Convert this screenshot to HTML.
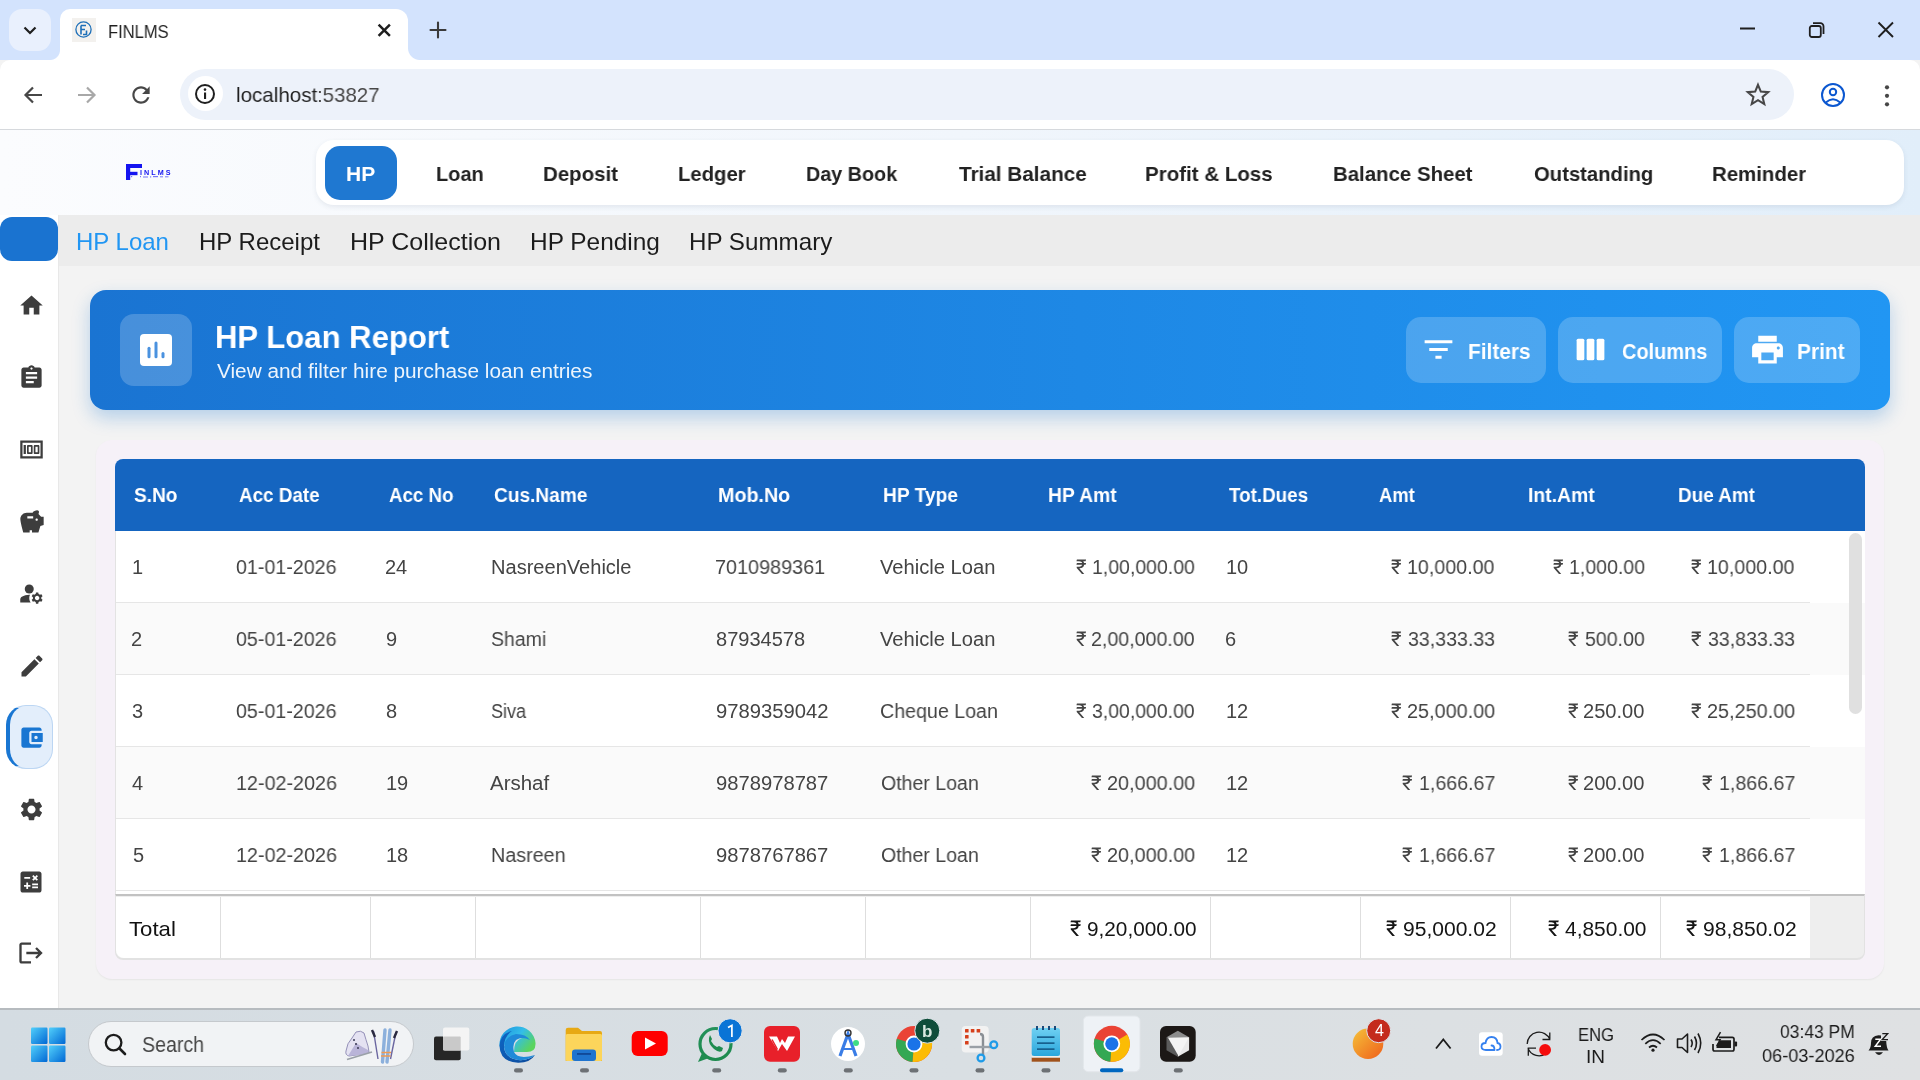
<!DOCTYPE html>
<html><head><meta charset="utf-8"><title>FINLMS</title>
<style>
*{box-sizing:border-box;margin:0;padding:0}
html,body{width:1920px;height:1080px;overflow:hidden;font-family:"Liberation Sans",sans-serif;background:#f3f3f3;position:relative}
.a{position:absolute}
.t{position:absolute;white-space:nowrap;line-height:1;transform-origin:0 0;will-change:transform}
svg{position:absolute;overflow:visible}
#tabbar{left:0;top:0;width:1920px;height:60px;background:#d3e3fd}
#dd{left:9px;top:9px;width:42px;height:42px;border-radius:13px;background:#e9f0fd}
#tab{left:60px;top:9px;width:348px;height:51px;background:#fff;border-radius:10px 12px 0 0}
#toolbar{left:0;top:60px;width:1920px;height:70px;background:#fff;border-bottom:1px solid #d6d9dd;border-radius:10px 10px 0 0}
#addr{left:180px;top:69px;width:1614px;height:51px;border-radius:26px;background:#edf2fa}
#infoc{left:188px;top:76px;width:35px;height:35px;border-radius:50%;background:#fff}
#header{left:0;top:130px;width:1920px;height:85px;background:linear-gradient(90deg,#fbfcfe 0%,#f1f6fc 50%,#e1eefa 100%)}
#nav{left:316px;top:140px;width:1588px;height:65px;background:#fff;border-radius:18px;box-shadow:0 2px 5px rgba(60,80,110,0.10)}
#hpbtn{left:325px;top:146px;width:72px;height:54px;border-radius:15px;background:#1f78d1}
#side{left:0;top:215px;width:59px;height:793px;background:#fff;border-right:1px solid #e8e8e8}
#sidetop{left:0px;top:216.5px;width:58px;height:44px;border-radius:12px;background:#1a73d0}
#subnav{left:59px;top:215px;width:1861px;height:51px;background:#ececec}
#pill{left:6px;top:705px;width:47px;height:64px;border-radius:20px;background:#e3eefb;border:1px solid #bcd6f3;border-left:4.5px solid #1976d2}
#banner{left:90px;top:290px;width:1800px;height:120px;border-radius:16px;background:linear-gradient(90deg,#1a74d2 0%,#1e88e5 55%,#2196f3 100%);box-shadow:0 8px 18px rgba(25,118,210,0.28)}
#iconbox{left:120px;top:314px;width:72px;height:72px;border-radius:14px;background:rgba(255,255,255,0.2)}
.btn{position:absolute;top:317px;height:66px;border-radius:15px;background:rgba(255,255,255,0.2)}
#card{left:96px;top:440px;width:1788px;height:539px;border-radius:16px;background:#f6f1f8;box-shadow:0 1px 2px rgba(0,0,0,0.06)}
#thead{left:115px;top:459px;width:1750px;height:72px;border-radius:8px 8px 0 0;background:#1565c0}
#tbody{left:115px;top:531px;width:1750px;height:363px;background:#fff;border-left:1px solid #e3e3e3}
.row{position:absolute;left:116px;width:1749px;height:72px}
.sep{position:absolute;left:116px;width:1694px;height:1px;background:#e6e6e6}
#sbtrack{left:1810px;top:531px;width:55px;height:363px;background:#fff}
#sbthumb{left:1849px;top:533px;width:13px;height:181px;border-radius:7px;background:#e0e0e0}
#tfoot{left:115px;top:894px;width:1750px;height:66px;background:#eeeeee;border-top:2px solid #c2c2c2;border-radius:0 0 8px 8px;border-bottom:2px solid #e2e2e2;border-left:1px solid #e2e2e2;border-right:1px solid #e2e2e2}
.fc{position:absolute;top:897px;height:61px;background:#fff;border-right:1.5px solid #dedede}
#taskbar{left:0;top:1008px;width:1920px;height:72px;background:linear-gradient(90deg,#d4dce2 0%,#d9dfe3 50%,#dfe1e3 100%);border-top:2px solid #b6bbbf}
#search{left:88px;top:1021px;width:326px;height:46px;border-radius:23px;background:#f1f3f5;border:1px solid #c5c9cd}
</style></head><body>
<div id="tabbar" class="a"></div>
<div id="dd" class="a"></div>
<div id="tab" class="a"></div>
<div id="toolbar" class="a"></div>
<div id="addr" class="a"></div>
<div id="infoc" class="a"></div>
<div id="header" class="a"></div>
<div id="nav" class="a"></div>
<div id="hpbtn" class="a"></div>
<div id="side" class="a"></div>
<div id="sidetop" class="a"></div>
<div id="subnav" class="a"></div>
<div id="pill" class="a"></div>
<div id="banner" class="a"></div>
<div id="iconbox" class="a"></div>
<div class="btn" style="left:1406px;width:140px"></div>
<div class="btn" style="left:1558px;width:164px"></div>
<div class="btn" style="left:1734px;width:126px"></div>
<div id="card" class="a"></div>
<div id="thead" class="a"></div>
<div id="tbody" class="a"></div>
<div class="row" style="top:603px;background:#fafafa"></div>
<div class="row" style="top:747px;background:#fafafa"></div>
<div class="sep" style="top:602px"></div>
<div class="sep" style="top:674px"></div>
<div class="sep" style="top:746px"></div>
<div class="sep" style="top:818px"></div>
<div class="sep" style="top:890px"></div>
<div id="sbthumb" class="a"></div>
<div id="tfoot" class="a"></div>
<div id="taskbar" class="a"></div>
<div id="search" class="a"></div>
<div class="fc" style="left:116px;width:105px;border-radius:0 0 0 8px"></div>
<div class="fc" style="left:221px;width:150px"></div>
<div class="fc" style="left:371px;width:105px"></div>
<div class="fc" style="left:476px;width:225px"></div>
<div class="fc" style="left:701px;width:165px"></div>
<div class="fc" style="left:866px;width:165px"></div>
<div class="fc" style="left:1031px;width:180px"></div>
<div class="fc" style="left:1211px;width:150px"></div>
<div class="fc" style="left:1361px;width:150px"></div>
<div class="fc" style="left:1511px;width:150px"></div>
<div class="fc" style="left:1661px;width:149px;border-right:none"></div>

<!-- chrome icons -->
<svg style="left:20px;top:20px" width="20" height="20" viewBox="0 0 20 20"><path d="M4.5 7.5 L10 13 L15.5 7.5" fill="none" stroke="#1f1f1f" stroke-width="2.2"/></svg>
<div class="a" style="left:72px;top:18px;width:24px;height:24px;background:#f3f1ee"></div>
<svg style="left:75px;top:21px" width="18" height="18" viewBox="0 0 18 18"><circle cx="8.5" cy="8.5" r="7.6" fill="none" stroke="#1d6fb8" stroke-width="1.3"/><path d="M6 4.5h5M6 4.5v9M6 8.5h4M8 13.5h3.5v-4" fill="none" stroke="#1d6fb8" stroke-width="1.6"/></svg>
<svg style="left:376px;top:22px" width="16" height="16" viewBox="0 0 16 16"><path d="M2.6 2.6 L13.9 13.9 M13.9 2.6 L2.6 13.9" stroke="#1f1f1f" stroke-width="2.5"/></svg>
<svg style="left:426px;top:18px" width="24" height="24" viewBox="0 0 24 24"><path d="M12 4.5v15M4.5 12h15" stroke="#3a3a3a" stroke-width="2.1" stroke-linecap="round"/></svg>
<svg style="left:1740px;top:27px" width="16" height="4"><rect x="0" y="0.5" width="15" height="2" fill="#1f1f1f"/></svg>
<svg style="left:1808px;top:21px" width="18" height="18" viewBox="0 0 18 18"><rect x="1.8" y="5" width="11" height="11" rx="2" fill="none" stroke="#1f1f1f" stroke-width="1.8"/><path d="M5 2.2h7.5a3 3 0 0 1 3 3V13" fill="none" stroke="#1f1f1f" stroke-width="1.8"/></svg>
<svg style="left:1877px;top:21px" width="18" height="18" viewBox="0 0 18 18"><path d="M1.5 1.5 L16 16 M16 1.5 L1.5 16" stroke="#1f1f1f" stroke-width="1.9"/></svg>
<svg style="left:21px;top:83px" width="24" height="24" viewBox="0 0 24 24"><path d="M21 12H5M12 4.5 4.5 12 12 19.5" fill="none" stroke="#474747" stroke-width="2.2"/></svg>
<svg style="left:75px;top:83px" width="24" height="24" viewBox="0 0 24 24"><path d="M3 12H19M12 4.5 19.5 12 12 19.5" fill="none" stroke="#a8a8a8" stroke-width="2.2"/></svg>
<svg style="left:128px;top:82px" width="26" height="26" viewBox="0 0 24 24"><path d="M17.65 6.35C16.2 4.9 14.21 4 12 4c-4.42 0-7.99 3.58-7.99 8s3.57 8 7.99 8c3.73 0 6.84-2.55 7.73-6h-2.08c-.82 2.33-3.04 4-5.65 4-3.31 0-6-2.69-6-6s2.69-6 6-6c1.66 0 3.14.69 4.22 1.78L13 11h7V4l-2.35 2.35z" fill="#474747"/></svg>
<svg style="left:193px;top:82px" width="24" height="24" viewBox="0 0 24 24"><circle cx="12" cy="12" r="9" fill="none" stroke="#1f1f1f" stroke-width="2"/><rect x="11" y="10.5" width="2.1" height="6.5" fill="#1f1f1f"/><circle cx="12" cy="7.6" r="1.3" fill="#1f1f1f"/></svg>
<svg style="left:1745px;top:82px" width="26" height="26" viewBox="0 0 24 24"><path d="M12 2.6 14.6 8.9 21.4 9.4 16.2 13.8 17.8 20.4 12 16.8 6.2 20.4 7.8 13.8 2.6 9.4 9.4 8.9Z" fill="none" stroke="#474747" stroke-width="1.9" stroke-linejoin="miter"/></svg>
<svg style="left:1820px;top:82px" width="26" height="26" viewBox="0 0 26 26"><circle cx="13" cy="13" r="11" fill="none" stroke="#0b57d0" stroke-width="2"/><circle cx="13" cy="10" r="3.2" fill="none" stroke="#0b57d0" stroke-width="2"/><path d="M5.8 20.5 Q13 14 20.2 20.5" fill="none" stroke="#0b57d0" stroke-width="2"/></svg>
<svg style="left:1882px;top:84px" width="10" height="24" viewBox="0 0 10 24"><circle cx="5" cy="3.3" r="2.1" fill="#474747"/><circle cx="5" cy="11.8" r="2.1" fill="#474747"/><circle cx="5" cy="20.3" r="2.1" fill="#474747"/></svg>
<!-- address text grey part -->
<div class="a" style="left:50px;top:50px;width:10px;height:10px;background:radial-gradient(circle at 0 0,#d3e3fd 9.5px,#fff 10.5px)"></div>
<div class="a" style="left:408px;top:48px;width:12px;height:12px;background:radial-gradient(circle at 100% 0,#d3e3fd 11.5px,#fff 12.5px)"></div>
<!-- logo -->
<svg style="left:0;top:0" width="1" height="1"><g fill="#1414f0"><rect x="126" y="165" width="4.2" height="15"/><rect x="126" y="164" width="16" height="4"/><rect x="129" y="171.8" width="8.5" height="3.4"/></g></svg>
<div class="t" style="left:139.5px;top:168.6px;font-size:7.2px;font-weight:bold;color:#1414f0;letter-spacing:2.05px">INLMS</div>
<svg style="left:0;top:0" width="1" height="1"><g fill="#4a4af5" opacity="0.75"><rect x="131" y="176" width="1.2" height="1.2"/><rect x="140" y="176" width="1" height="1.2"/><rect x="143" y="176.5" width="5" height="1"/><rect x="150" y="176.3" width="1.2" height="1.2"/><rect x="153" y="176" width="5" height="1.2"/><rect x="160" y="176.3" width="3" height="1"/><rect x="165" y="176.3" width="3.5" height="1"/></g></svg>
<!-- sidebar icons -->
<svg style="left:18.15px;top:292.4px" width="27" height="27" viewBox="0 0 24 24"><path fill="#3d3d3d" d="M10 20v-6h4v6h5v-8h3L12 3 2 12h3v8z"/></svg>
<svg style="left:18.45px;top:364.1px" width="27" height="27" viewBox="0 0 24 24"><path fill="#3d3d3d" d="M19 3h-4.18C14.4 1.84 13.3 1 12 1c-1.3 0-2.4.84-2.82 2H5c-1.1 0-2 .9-2 2v14c0 1.1.9 2 2 2h14c1.1 0 2-.9 2-2V5c0-1.1-.9-2-2-2zm-7 0c.55 0 1 .45 1 1s-.45 1-1 1-1-.45-1-1 .45-1 1-1zm2 14H7v-2h7v2zm3-4H7v-2h10v2zm0-4H7V7h10v2z"/></svg>
<svg style="left:17.94px;top:435.7px" width="27" height="27" viewBox="0 0 24 24"><path fill="#3d3d3d" d="M5 8h2v8H5zm7 0H9c-.55 0-1 .45-1 1v6c0 .55.45 1 1 1h3c.55 0 1-.45 1-1V9c0-.55-.45-1-1-1zm-.5 6.5h-2v-5h2v5zM18 8h-3c-.55 0-1 .45-1 1v6c0 .55.45 1 1 1h3c.55 0 1-.45 1-1V9c0-.55-.45-1-1-1zm-.5 6.5h-2v-5h2v5zM2 4v16h20V4H2zm2 14V6h16v12H4z"/></svg>
<svg style="left:17.7px;top:507.8px" width="28" height="28" viewBox="0 0 24 24"><path fill="#3d3d3d" d="M19.83 7.5l-2.27-2.27c.07-.42.18-.81.32-1.15.08-.18.12-.37.12-.58 0-.83-.67-1.5-1.5-1.5-1.64 0-3.09.79-4 2h-5C4.46 4 2 6.46 2 9.5S4.5 21 4.5 21H10v-2h2v2h5.5l1.68-5.59 2.82-.94V7.5h-2.17zM13 9H8V7h5v2zm3 2c-.55 0-1-.45-1-1s.45-1 1-1 1 .45 1 1-.45 1-1 1z"/></svg>
<svg style="left:17.8px;top:579.75px" width="27" height="27" viewBox="0 0 24 24"><circle cx="10" cy="8" r="4" fill="#3d3d3d"/><path fill="#3d3d3d" d="M10.67 13.02c-.22-.01-.44-.02-.67-.02-2.42 0-4.68.67-6.61 1.82-.88.52-1.39 1.5-1.39 2.53V20h9.26c-.79-1.13-1.26-2.51-1.26-4 0-1.07.25-2.07.67-2.98zM20.75 16c0-.22-.03-.42-.06-.63l1.14-1.01-1-1.73-1.45.49c-.32-.27-.68-.48-1.08-.63L18 11h-2l-.3 1.49c-.4.15-.76.36-1.08.63l-1.45-.49-1 1.73 1.14 1.01c-.03.21-.06.41-.06.63s.03.42.06.63l-1.14 1.01 1 1.73 1.45-.49c.32.27.68.48 1.08.63L16 21h2l.3-1.49c.4-.15.76-.36 1.08-.63l1.45.49 1-1.73-1.14-1.01c.03-.21.06-.41.06-.63zM17 18c-1.1 0-2-.9-2-2s.9-2 2-2 2 .9 2 2-.9 2-2 2z"/></svg>
<svg style="left:18.05px;top:651.85px" width="28" height="28" viewBox="0 0 24 24"><path fill="#3d3d3d" d="M3 17.25V21h3.75L17.81 9.94l-3.75-3.75L3 17.25zM20.71 7.04c.39-.39.39-1.02 0-1.41l-2.34-2.34c-.39-.39-1.02-.39-1.41 0l-1.83 1.83 3.75 3.75 1.83-1.83z"/></svg>
<svg style="left:17.9px;top:723.8px" width="27" height="27" viewBox="0 0 24 24"><path fill="#1976d2" d="M21 18v1c0 1.1-.9 2-2 2H5c-1.11 0-2-.9-2-2V5c0-1.1.89-2 2-2h14c1.1 0 2 .9 2 2v1h-9c-1.11 0-2 .9-2 2v8c0 1.1.89 2 2 2h9zm-9-2h10V8H12v8zm4-2.5c-.83 0-1.5-.67-1.5-1.5s.67-1.5 1.5-1.5 1.5.67 1.5 1.5-.67 1.5-1.5 1.5z"/></svg>
<svg style="left:17.86px;top:796.06px" width="27" height="27" viewBox="0 0 24 24"><path fill="#3d3d3d" d="M19.14 12.94c.04-.3.06-.61.06-.94 0-.32-.02-.64-.07-.94l2.03-1.58c.18-.14.23-.41.12-.61l-1.92-3.32c-.12-.22-.37-.29-.59-.22l-2.39.96c-.5-.38-1.03-.7-1.62-.94l-.36-2.54c-.04-.24-.24-.41-.48-.41h-3.84c-.24 0-.43.17-.47.41l-.36 2.54c-.59.24-1.13.57-1.62.94l-2.39-.96c-.22-.08-.47 0-.59.22L2.74 8.87c-.12.21-.08.47.12.61l2.03 1.58c-.05.3-.09.63-.09.94s.02.64.07.94l-2.03 1.58c-.18.14-.23.41-.12.61l1.92 3.32c.12.22.37.29.59.22l2.39-.96c.5.38 1.03.7 1.62.94l.36 2.54c.05.24.24.41.48.41h3.84c.24 0 .44-.17.47-.41l.36-2.54c.59-.24 1.13-.56 1.62-.94l2.39.96c.22.08.47 0 .59-.22l1.92-3.32c.12-.22.07-.47-.12-.61l-2.01-1.58zM12 15.6c-1.98 0-3.6-1.62-3.6-3.6s1.62-3.6 3.6-3.6 3.6 1.62 3.6 3.6-1.62 3.6-3.6 3.6z"/></svg>
<svg style="left:17.45px;top:867.65px" width="28" height="28" viewBox="0 0 24 24"><path fill="#3d3d3d" d="M19 3H5c-1.1 0-2 .9-2 2v14c0 1.1.9 2 2 2h14c1.1 0 2-.9 2-2V5c0-1.1-.9-2-2-2zm-5.97 4.06L14.09 6l1.41 1.41L16.91 6l1.06 1.06-1.41 1.41 1.41 1.41-1.06 1.06-1.41-1.4-1.41 1.41-1.06-1.06 1.41-1.41-1.41-1.42zm-6.78.66h5v1.5h-5v-1.5zM11.5 16h-2v2H8v-2H6v-1.5h2v-2h1.5v2h2V16zm6.5 1.25h-5v-1.5h5v1.5zm0-2.5h-5v-1.5h5v1.5z"/></svg>
<svg style="left:17.28px;top:939.48px" width="28" height="28" viewBox="0 0 24 24"><path fill="#3d3d3d" d="M17 7l-1.41 1.41L18.17 11H8v2h10.17l-2.58 2.58L17 17l5-5zM4 5h8V3H4c-1.1 0-2 .9-2 2v14c0 1.1.9 2 2 2h8v-2H4V5z"/></svg>
<!-- banner icons -->
<div class="a" style="left:140px;top:334px;width:32px;height:32px;border-radius:4px;background:#fff"></div>
<svg style="left:0;top:0" width="1" height="1"><g fill="#4a92df"><rect x="147.5" y="346.8" width="3" height="11.5" rx="1.5"/><rect x="154.5" y="341.4" width="3" height="16.9" rx="1.5"/><rect x="161.5" y="351.9" width="3" height="6.4" rx="1.5"/></g></svg>
<svg style="left:1420.4px;top:331.46px" width="37" height="37" viewBox="0 0 24 24"><path fill="#fff" d="M10 18h4v-2h-4v2zM3 6v2h18V6H3zm3 7h12v-2H6v2z"/></svg>
<svg style="left:1572.3px;top:331.2px" width="37" height="37" viewBox="0 0 24 24"><g fill="#fff"><rect x="3" y="5" width="5" height="14" rx="1"/><rect x="9.5" y="5" width="5" height="14" rx="1"/><rect x="16" y="5" width="5" height="14" rx="1"/></g></svg>
<svg style="left:1748.6px;top:331.35px" width="37" height="37" viewBox="0 0 24 24"><path fill="#fff" d="M19 8H5c-1.66 0-3 1.34-3 3v6h4v4h12v-4h4v-6c0-1.66-1.34-3-3-3zm-3 11H8v-5h8v5zm3-7c-.55 0-1-.45-1-1s.45-1 1-1 1 .45 1 1-.45 1-1 1zm-1-9H6v4h12V3z"/></svg>
<!-- taskbar -->
<svg style="left:0;top:0" width="1" height="1">
 <defs>
  <linearGradient id="win" x1="0" y1="0" x2="1" y2="1"><stop offset="0" stop-color="#52d0fb"/><stop offset="1" stop-color="#0067d4"/></linearGradient>
  <linearGradient id="edge1" x1="0" y1="0" x2="1" y2="1"><stop offset="0" stop-color="#36c0f0"/><stop offset="0.6" stop-color="#1d8fd8"/><stop offset="1" stop-color="#55d46a"/></linearGradient>
  <linearGradient id="wa" x1="0" y1="0" x2="0" y2="1"><stop offset="0" stop-color="#23915a"/><stop offset="1" stop-color="#1d8a4e"/></linearGradient>
  <linearGradient id="np" x1="0" y1="0" x2="0" y2="1"><stop offset="0" stop-color="#6fd0f2"/><stop offset="1" stop-color="#2aa6dc"/></linearGradient>
  <linearGradient id="org" x1="0" y1="0" x2="1" y2="1"><stop offset="0" stop-color="#f5c23a"/><stop offset="1" stop-color="#ef5f1a"/></linearGradient>
 </defs>
 <!-- windows logo -->
 <g fill="url(#win)"><rect x="31" y="1027.5" width="16.5" height="16.5" rx="1.2"/><rect x="49" y="1027.5" width="16.5" height="16.5" rx="1.2"/><rect x="31" y="1045.5" width="16.5" height="16.5" rx="1.2"/><rect x="49" y="1045.5" width="16.5" height="16.5" rx="1.2"/></g>
 <!-- search icon -->
 <circle cx="113.6" cy="1042.6" r="7.8" fill="none" stroke="#1c1c1c" stroke-width="2.3"/><path d="M119.5 1048.5 L125 1054" stroke="#1c1c1c" stroke-width="2.6" stroke-linecap="round"/>
 <!-- skates & skis -->
 <path d="M346 1051 Q347 1043 352 1038 L356 1032 Q361 1030 364 1033 Q366 1040 368 1046 L369 1052 Q360 1055 349 1056 Q345 1055 346 1051Z" fill="#e4e2f2" stroke="#8a86b0" stroke-width="0.9"/>
 <path d="M356 1043 Q362 1047 368 1050 L368 1053 Q358 1056 348 1056Z" fill="#b9b4d8"/>
 <g fill="#3a3a55"><circle cx="354" cy="1040" r="1"/><circle cx="356" cy="1044" r="1"/><circle cx="358" cy="1048" r="1"/></g>
 <path d="M347 1059.5 L372 1052" stroke="#9aa0a8" stroke-width="1.8"/>
 <path d="M373.5 1031 L378 1059" stroke="#6a66a0" stroke-width="1.4"/><path d="M396 1032 L390.5 1059" stroke="#6a66a0" stroke-width="1.4"/>
 <path d="M372 1030 L375 1037 M397 1031 L394 1038" stroke="#2a2a40" stroke-width="2.4"/>
 <path d="M385 1030 L382.5 1062" stroke="#8cb0dc" stroke-width="3.4" stroke-linecap="round"/><path d="M390 1030 L387 1062" stroke="#8cb0dc" stroke-width="3.4" stroke-linecap="round"/>
 <path d="M381.5 1052.5 L391 1052.5 M381 1056 L390.5 1056" stroke="#f09a50" stroke-width="1.3"/>
 <!-- task view -->
 <rect x="434" y="1036.6" width="26.7" height="23.7" rx="2" fill="#262626"/>
 <rect x="443" y="1027.4" width="26.3" height="23.1" rx="2" fill="#f4f4f4"/>
 <rect x="443" y="1036.6" width="17.7" height="13.9" rx="1" fill="#c9c9c9"/>
 <!-- edge -->
 <defs><linearGradient id="edgeA" x1="0" y1="0" x2="1" y2="0.6"><stop offset="0" stop-color="#1a8fe0"/><stop offset="0.55" stop-color="#33bde8"/><stop offset="1" stop-color="#5ad45e"/></linearGradient>
 <linearGradient id="edgeB" x1="0" y1="0" x2="1" y2="1"><stop offset="0" stop-color="#0e67c6"/><stop offset="1" stop-color="#0c4a9a"/></linearGradient></defs>
 <path d="M499.5 1046 A18 18 0 0 1 535.5 1043 Q536 1052 527 1052 L514 1052 Q514 1040 522 1038 Q508 1036 502 1049 Z" fill="url(#edgeA)"/>
 <path d="M499.5 1046 Q500 1034 512 1031 Q504 1036 504 1047 Q505 1058 518 1060 Q528 1061 535 1055 Q530 1063 518 1062.8 Q500 1062 499.5 1046 Z" fill="url(#edgeB)"/>
 <path d="M504 1047 Q505 1036 516 1034 Q526 1034 530 1040 Q522 1036 516 1040 Q512 1044 514 1052 Q518 1060 535 1055 Q528 1061 518 1060 Q505 1058 504 1047Z" fill="#1f8ad9"/>
 <!-- explorer -->
 <path d="M565.7 1030 Q565.7 1027.7 568 1027.7 L578 1027.7 L582 1031 L600 1031 Q602 1031 602 1033 L602 1061 L565.7 1061 Z" fill="#e7a914"/>
 <rect x="565.7" y="1034" width="36.3" height="27" rx="1.5" fill="#fcd55b"/>
 <rect x="572" y="1049.5" width="24" height="11.5" rx="3" fill="#1f74cf"/>
 <rect x="577" y="1053.2" width="14" height="1.5" fill="#0e3f8a"/>
 <!-- youtube -->
 <rect x="631.7" y="1031" width="36" height="25" rx="6" fill="#ff0000"/>
 <path d="M645 1037.5 L656 1043.5 L645 1049.5 Z" fill="#fff"/>
 <!-- whatsapp -->
 <circle cx="715.5" cy="1044" r="15.5" fill="none" stroke="url(#wa)" stroke-width="3.2"/>
 <path d="M698 1062 L702.5 1052 L709 1058 Z" fill="#1f8c50"/>
 <path d="M709 1038 Q708 1044 714 1049 Q719 1053 722 1051 L723 1048 L719 1046 L717 1047 Q713 1045 711 1041 L712 1039 L710 1035 Z" fill="#1f8c50"/>
 <circle cx="730.1" cy="1030.8" r="12.1" fill="#0a74d6" stroke="#dfe5ea" stroke-width="1"/><path d="M728 1027.6 L731.9 1025.4 V1037" fill="none" stroke="#fff" stroke-width="1.7"/>
 <!-- wps -->
 <rect x="764" y="1026" width="36" height="35.7" rx="6" fill="#e8202a"/>
 <path d="M769 1036.5 H777 L780 1043 L782 1039 L785 1043 L788 1036.5 H795 L787 1051 L782 1044 L778 1051 Z" fill="#fff"/><path d="M772 1039.5 L777.5 1049.5" stroke="#e8202a" stroke-width="1.5"/>
 <!-- android studio -->
 <circle cx="848" cy="1044" r="17" fill="#ffffff"/>
 <path d="M840 1056 L848 1034 L856 1056" fill="none" stroke="#3a7de6" stroke-width="3.2"/>
 <path d="M842 1049 L854 1049" stroke="#3a7de6" stroke-width="2"/>
 <circle cx="848" cy="1033" r="3" fill="none" stroke="#333" stroke-width="1.4"/>
 <circle cx="856" cy="1043" r="3" fill="#3ddc84"/>
 <!-- chrome b -->
 <circle cx="914" cy="1044" r="18" fill="#ea4335"/><path d="M914 1044 L929.43 1034.73 A18 18 0 0 1 912.43 1061.93 Z" fill="#fbbc05"/><path d="M914 1044 L912.43 1061.93 A18 18 0 0 1 896.79 1038.74 Z" fill="#34a853"/><circle cx="914" cy="1044" r="8.4" fill="#fff"/><circle cx="914" cy="1044" r="6.6" fill="#1a73e8"/>
 <circle cx="927.3" cy="1030.7" r="12.5" fill="#0f4d3a" stroke="#dfe5ea" stroke-width="1"/>
 <!-- snipping -->
 <rect x="961.7" y="1026" width="27" height="26.5" rx="4" fill="#f2f2f2"/>
 <g fill="#d6401c"><rect x="965" y="1029" width="3.6" height="3.6" rx="0.6"/><rect x="970.8" y="1029" width="3.6" height="3.6" rx="0.6"/><rect x="976.6" y="1029" width="3.6" height="3.6" rx="0.6"/><rect x="965" y="1035" width="3.6" height="3.6" rx="0.6"/><rect x="965" y="1041" width="3.6" height="3.6" rx="0.6"/></g>
 <path d="M980 1034 Q983 1034 983 1037 V1055" fill="none" stroke="#8a8f95" stroke-width="2.4"/>
 <path d="M969.5 1047 H991" stroke="#9aa0a6" stroke-width="2.4"/>
 <circle cx="993.8" cy="1044.8" r="3.4" fill="none" stroke="#1e9be8" stroke-width="2.3"/>
 <circle cx="981" cy="1058" r="3.4" fill="none" stroke="#1e9be8" stroke-width="2.3"/>
 <!-- notepad -->
 <rect x="1031.7" y="1028" width="28.3" height="28" rx="2.5" fill="url(#np)"/>
 <rect x="1031.7" y="1057.5" width="28.3" height="4.2" fill="#a0521c"/>
 <g fill="#1a4a7a"><rect x="1036" y="1026" width="2" height="4"/><rect x="1042" y="1026" width="2" height="4"/><rect x="1048" y="1026" width="2" height="4"/><rect x="1054" y="1026" width="2" height="4"/></g>
 <g fill="#16608e"><rect x="1037" y="1036.3" width="17.5" height="1.7"/><rect x="1037" y="1042.3" width="17.5" height="1.7"/><rect x="1037" y="1048.3" width="17.5" height="1.7"/></g><rect x="1031.7" y="1056" width="28.3" height="1.5" fill="#f2efe8"/>
 <!-- chrome active -->
 <rect x="1083.3" y="1016" width="56.7" height="55.7" rx="5" fill="#eef2f6" stroke="#e2e6ea" stroke-width="1"/>
 <circle cx="1111.8" cy="1043.8" r="18" fill="#ea4335"/><path d="M1111.8 1043.8 L1127.23 1034.53 A18 18 0 0 1 1110.23 1061.73 Z" fill="#fbbc05"/><path d="M1111.8 1043.8 L1110.23 1061.73 A18 18 0 0 1 1094.59 1038.54 Z" fill="#34a853"/><circle cx="1111.8" cy="1043.8" r="8.4" fill="#fff"/><circle cx="1111.8" cy="1043.8" r="6.6" fill="#1a73e8"/>
 <rect x="1100" y="1068.3" width="23.3" height="4" rx="2" fill="#0067c0"/>
 <!-- unity like -->
 <rect x="1160" y="1026" width="35.7" height="35.7" rx="6" fill="#1c1816"/>
 <path d="M1166.5 1037.3 L1177.8 1030.8 L1189.1 1037.3 L1177.8 1043.8 Z" fill="#8c8c8c"/>
 <path d="M1177.8 1043.8 L1189.1 1037.3 L1189.1 1050.3 L1177.8 1056.8 Z" fill="#e9e9e9"/>
 <path d="M1166.5 1037.3 L1177.8 1043.8 L1177.8 1056.8 L1166.5 1050.3 Z" fill="#5b5b5b"/>
 <path d="M1168 1037.8 L1189 1037.3 L1178.5 1056" fill="#f4f4f4"/>
 <!-- dots -->
 <g fill="#6d7175"><rect x="514" y="1068.3" width="9" height="4.3" rx="2.1"/><rect x="580" y="1068.3" width="9" height="4.3" rx="2.1"/><rect x="712.2" y="1068.3" width="9" height="4.3" rx="2.1"/><rect x="777.8" y="1068.3" width="9" height="4.3" rx="2.1"/><rect x="843.8" y="1068.3" width="9" height="4.3" rx="2.1"/><rect x="909.5" y="1068.3" width="9" height="4.3" rx="2.1"/><rect x="975.5" y="1068.3" width="9" height="4.3" rx="2.1"/><rect x="1041.5" y="1068.3" width="9" height="4.3" rx="2.1"/><rect x="1173.8" y="1068.3" width="9" height="4.3" rx="2.1"/></g>
 <!-- tray -->
 <circle cx="1368" cy="1043.7" r="15.3" fill="url(#org)"/>
 <circle cx="1378.7" cy="1030.7" r="12" fill="#c42b1c" stroke="#dfe5ea" stroke-width="1"/>
 <path d="M1436 1048.5 L1443.3 1039.5 L1450.6 1048.5" fill="none" stroke="#1c1c1c" stroke-width="1.8"/>
 <rect x="1479" y="1032.3" width="23.7" height="23.4" rx="3" fill="#ffffff"/>
 <path d="M1494.5 1050 L1486 1050 Q1481.5 1050 1481.5 1046.5 Q1481.5 1043 1485.5 1043 Q1486.5 1037 1491.5 1037 Q1497 1037 1497.5 1043 Q1500.5 1043.5 1500.5 1046.5 Q1500.5 1050 1497 1050 M1494.5 1050 Q1494.5 1045.5 1491.5 1045.5" fill="none" stroke="#3581ef" stroke-width="1.8" stroke-linecap="round"/>
 <path d="M1527.20 1044.00 A11.8 11.8 0 0 1 1549.94 1039.58 M1549.8 1032.4 V1039.5 H1542.5 M1527.98 1048.23 A11.8 11.8 0 0 0 1546.58 1053.04 M1528.3 1055.7 V1048.1 H1536" fill="none" stroke="#1c1c1c" stroke-width="1.3"/>
 <circle cx="1545.1" cy="1049.9" r="5.9" fill="#f50c0c"/>
 <!-- wifi -->
 <g fill="none" stroke="#1c1c1c" stroke-width="1.7"><path d="M1641.5 1040 Q1653 1029 1664.5 1040"/><path d="M1645.3 1043.8 Q1653 1036.5 1660.7 1043.8"/><path d="M1649 1047.5 Q1653 1044 1657 1047.5"/></g>
 <circle cx="1653" cy="1050.2" r="1.6" fill="#1c1c1c"/>
 <!-- volume -->
 <path d="M1677.5 1039 L1682 1039 L1687.5 1034 L1687.5 1052.5 L1682 1047.5 L1677.5 1047.5 Z" fill="none" stroke="#1c1c1c" stroke-width="1.6" stroke-linejoin="round"/>
 <path d="M1691 1039.5 Q1693.5 1043.3 1691 1047 M1694.5 1036.5 Q1698.5 1043.3 1694.5 1050 M1698 1033.5 Q1703.5 1043.3 1698 1053" fill="none" stroke="#1c1c1c" stroke-width="1.6"/>
 <!-- battery -->
 <path d="M1719 1037.3 H1732.3 Q1734 1037.3 1734 1039 V1049.3 Q1734 1051 1732.3 1051 H1714.7 Q1713 1051 1713 1049.3 V1044" fill="none" stroke="#1c1c1c" stroke-width="1.7"/>
 <rect x="1734.5" y="1041.5" width="2.6" height="5" rx="1" fill="#1c1c1c"/>
 <path d="M1720 1040.3 H1731 V1048 H1716.5 V1045 Z" fill="#1c1c1c"/>
 <path d="M1720.5 1032.2 L1716 1039.8 L1720 1039.8 L1716.8 1046" fill="none" stroke="#1c1c1c" stroke-width="1.5"/>
 <!-- bell zz -->
 <path d="M1868.5 1050.5 Q1871 1048 1871 1043 Q1871 1036 1878.5 1035.3 L1881 1035.6 L1881 1041 L1886.2 1041 Q1886.5 1048 1888.5 1050.5 Z" fill="#1c1c1c"/>
 <path d="M1875 1052.3 H1883 Q1879 1057.5 1875 1052.3Z" fill="#1c1c1c"/>
 <path d="M1875.3 1039.3 H1880.6 L1875.3 1046.3 H1881" fill="none" stroke="#fff" stroke-width="1.5"/>
 <path d="M1882.3 1033.6 H1887.6 L1882.3 1039.6 H1888" fill="none" stroke="#1c1c1c" stroke-width="1.4"/>
</svg>

<svg style="left:1075.71px;top:574px" width="1" height="1"><path transform="scale(0.00991,-0.00991)" fill="#444444" d="M45 1298 92 1456H1017L971 1298H734Q798 1218 816 1100H1017L971 942H819Q802 784 691.0 684.0Q580 584 336 584L828 12V0H601L72 618L71 742H315Q448 742 524.5 798.0Q601 854 622 942H43L89 1100H620Q598 1190 523.0 1244.0Q448 1298 309 1298Z"/></svg>
<svg style="left:1391.11px;top:574px" width="1" height="1"><path transform="scale(0.00991,-0.00991)" fill="#444444" d="M45 1298 92 1456H1017L971 1298H734Q798 1218 816 1100H1017L971 942H819Q802 784 691.0 684.0Q580 584 336 584L828 12V0H601L72 618L71 742H315Q448 742 524.5 798.0Q601 854 622 942H43L89 1100H620Q598 1190 523.0 1244.0Q448 1298 309 1298Z"/></svg>
<svg style="left:1552.52px;top:574px" width="1" height="1"><path transform="scale(0.00991,-0.00991)" fill="#444444" d="M45 1298 92 1456H1017L971 1298H734Q798 1218 816 1100H1017L971 942H819Q802 784 691.0 684.0Q580 584 336 584L828 12V0H601L72 618L71 742H315Q448 742 524.5 798.0Q601 854 622 942H43L89 1100H620Q598 1190 523.0 1244.0Q448 1298 309 1298Z"/></svg>
<svg style="left:1691.11px;top:574px" width="1" height="1"><path transform="scale(0.00991,-0.00991)" fill="#444444" d="M45 1298 92 1456H1017L971 1298H734Q798 1218 816 1100H1017L971 942H819Q802 784 691.0 684.0Q580 584 336 584L828 12V0H601L72 618L71 742H315Q448 742 524.5 798.0Q601 854 622 942H43L89 1100H620Q598 1190 523.0 1244.0Q448 1298 309 1298Z"/></svg>
<svg style="left:1075.71px;top:646px" width="1" height="1"><path transform="scale(0.00991,-0.00991)" fill="#444444" d="M45 1298 92 1456H1017L971 1298H734Q798 1218 816 1100H1017L971 942H819Q802 784 691.0 684.0Q580 584 336 584L828 12V0H601L72 618L71 742H315Q448 742 524.5 798.0Q601 854 622 942H43L89 1100H620Q598 1190 523.0 1244.0Q448 1298 309 1298Z"/></svg>
<svg style="left:1391.28px;top:646px" width="1" height="1"><path transform="scale(0.00991,-0.00991)" fill="#444444" d="M45 1298 92 1456H1017L971 1298H734Q798 1218 816 1100H1017L971 942H819Q802 784 691.0 684.0Q580 584 336 584L828 12V0H601L72 618L71 742H315Q448 742 524.5 798.0Q601 854 622 942H43L89 1100H620Q598 1190 523.0 1244.0Q448 1298 309 1298Z"/></svg>
<svg style="left:1567.92px;top:646px" width="1" height="1"><path transform="scale(0.00991,-0.00991)" fill="#444444" d="M45 1298 92 1456H1017L971 1298H734Q798 1218 816 1100H1017L971 942H819Q802 784 691.0 684.0Q580 584 336 584L828 12V0H601L72 618L71 742H315Q448 742 524.5 798.0Q601 854 622 942H43L89 1100H620Q598 1190 523.0 1244.0Q448 1298 309 1298Z"/></svg>
<svg style="left:1691.28px;top:646px" width="1" height="1"><path transform="scale(0.00991,-0.00991)" fill="#444444" d="M45 1298 92 1456H1017L971 1298H734Q798 1218 816 1100H1017L971 942H819Q802 784 691.0 684.0Q580 584 336 584L828 12V0H601L72 618L71 742H315Q448 742 524.5 798.0Q601 854 622 942H43L89 1100H620Q598 1190 523.0 1244.0Q448 1298 309 1298Z"/></svg>
<svg style="left:1075.71px;top:718px" width="1" height="1"><path transform="scale(0.00991,-0.00991)" fill="#444444" d="M45 1298 92 1456H1017L971 1298H734Q798 1218 816 1100H1017L971 942H819Q802 784 691.0 684.0Q580 584 336 584L828 12V0H601L72 618L71 742H315Q448 742 524.5 798.0Q601 854 622 942H43L89 1100H620Q598 1190 523.0 1244.0Q448 1298 309 1298Z"/></svg>
<svg style="left:1391.11px;top:718px" width="1" height="1"><path transform="scale(0.00991,-0.00991)" fill="#444444" d="M45 1298 92 1456H1017L971 1298H734Q798 1218 816 1100H1017L971 942H819Q802 784 691.0 684.0Q580 584 336 584L828 12V0H601L72 618L71 742H315Q448 742 524.5 798.0Q601 854 622 942H43L89 1100H620Q598 1190 523.0 1244.0Q448 1298 309 1298Z"/></svg>
<svg style="left:1567.92px;top:718px" width="1" height="1"><path transform="scale(0.00991,-0.00991)" fill="#444444" d="M45 1298 92 1456H1017L971 1298H734Q798 1218 816 1100H1017L971 942H819Q802 784 691.0 684.0Q580 584 336 584L828 12V0H601L72 618L71 742H315Q448 742 524.5 798.0Q601 854 622 942H43L89 1100H620Q598 1190 523.0 1244.0Q448 1298 309 1298Z"/></svg>
<svg style="left:1691.11px;top:718px" width="1" height="1"><path transform="scale(0.00991,-0.00991)" fill="#444444" d="M45 1298 92 1456H1017L971 1298H734Q798 1218 816 1100H1017L971 942H819Q802 784 691.0 684.0Q580 584 336 584L828 12V0H601L72 618L71 742H315Q448 742 524.5 798.0Q601 854 622 942H43L89 1100H620Q598 1190 523.0 1244.0Q448 1298 309 1298Z"/></svg>
<svg style="left:1091.11px;top:790px" width="1" height="1"><path transform="scale(0.00991,-0.00991)" fill="#444444" d="M45 1298 92 1456H1017L971 1298H734Q798 1218 816 1100H1017L971 942H819Q802 784 691.0 684.0Q580 584 336 584L828 12V0H601L72 618L71 742H315Q448 742 524.5 798.0Q601 854 622 942H43L89 1100H620Q598 1190 523.0 1244.0Q448 1298 309 1298Z"/></svg>
<svg style="left:1402.25px;top:790px" width="1" height="1"><path transform="scale(0.00991,-0.00991)" fill="#444444" d="M45 1298 92 1456H1017L971 1298H734Q798 1218 816 1100H1017L971 942H819Q802 784 691.0 684.0Q580 584 336 584L828 12V0H601L72 618L71 742H315Q448 742 524.5 798.0Q601 854 622 942H43L89 1100H620Q598 1190 523.0 1244.0Q448 1298 309 1298Z"/></svg>
<svg style="left:1567.92px;top:790px" width="1" height="1"><path transform="scale(0.00991,-0.00991)" fill="#444444" d="M45 1298 92 1456H1017L971 1298H734Q798 1218 816 1100H1017L971 942H819Q802 784 691.0 684.0Q580 584 336 584L828 12V0H601L72 618L71 742H315Q448 742 524.5 798.0Q601 854 622 942H43L89 1100H620Q598 1190 523.0 1244.0Q448 1298 309 1298Z"/></svg>
<svg style="left:1702.25px;top:790px" width="1" height="1"><path transform="scale(0.00991,-0.00991)" fill="#444444" d="M45 1298 92 1456H1017L971 1298H734Q798 1218 816 1100H1017L971 942H819Q802 784 691.0 684.0Q580 584 336 584L828 12V0H601L72 618L71 742H315Q448 742 524.5 798.0Q601 854 622 942H43L89 1100H620Q598 1190 523.0 1244.0Q448 1298 309 1298Z"/></svg>
<svg style="left:1091.11px;top:862px" width="1" height="1"><path transform="scale(0.00991,-0.00991)" fill="#444444" d="M45 1298 92 1456H1017L971 1298H734Q798 1218 816 1100H1017L971 942H819Q802 784 691.0 684.0Q580 584 336 584L828 12V0H601L72 618L71 742H315Q448 742 524.5 798.0Q601 854 622 942H43L89 1100H620Q598 1190 523.0 1244.0Q448 1298 309 1298Z"/></svg>
<svg style="left:1402.25px;top:862px" width="1" height="1"><path transform="scale(0.00991,-0.00991)" fill="#444444" d="M45 1298 92 1456H1017L971 1298H734Q798 1218 816 1100H1017L971 942H819Q802 784 691.0 684.0Q580 584 336 584L828 12V0H601L72 618L71 742H315Q448 742 524.5 798.0Q601 854 622 942H43L89 1100H620Q598 1190 523.0 1244.0Q448 1298 309 1298Z"/></svg>
<svg style="left:1567.92px;top:862px" width="1" height="1"><path transform="scale(0.00991,-0.00991)" fill="#444444" d="M45 1298 92 1456H1017L971 1298H734Q798 1218 816 1100H1017L971 942H819Q802 784 691.0 684.0Q580 584 336 584L828 12V0H601L72 618L71 742H315Q448 742 524.5 798.0Q601 854 622 942H43L89 1100H620Q598 1190 523.0 1244.0Q448 1298 309 1298Z"/></svg>
<svg style="left:1702.25px;top:862px" width="1" height="1"><path transform="scale(0.00991,-0.00991)" fill="#444444" d="M45 1298 92 1456H1017L971 1298H734Q798 1218 816 1100H1017L971 942H819Q802 784 691.0 684.0Q580 584 336 584L828 12V0H601L72 618L71 742H315Q448 742 524.5 798.0Q601 854 622 942H43L89 1100H620Q598 1190 523.0 1244.0Q448 1298 309 1298Z"/></svg>
<svg style="left:1069.60px;top:936px" width="1" height="1"><path transform="scale(0.01060,-0.01060)" fill="#151515" d="M45 1298 92 1456H1017L971 1298H734Q798 1218 816 1100H1017L971 942H819Q802 784 691.0 684.0Q580 584 336 584L828 12V0H601L72 618L71 742H315Q448 742 524.5 798.0Q601 854 622 942H43L89 1100H620Q598 1190 523.0 1244.0Q448 1298 309 1298Z"/></svg>
<svg style="left:1385.64px;top:936px" width="1" height="1"><path transform="scale(0.01060,-0.01060)" fill="#151515" d="M45 1298 92 1456H1017L971 1298H734Q798 1218 816 1100H1017L971 942H819Q802 784 691.0 684.0Q580 584 336 584L828 12V0H601L72 618L71 742H315Q448 742 524.5 798.0Q601 854 622 942H43L89 1100H620Q598 1190 523.0 1244.0Q448 1298 309 1298Z"/></svg>
<svg style="left:1548.26px;top:936px" width="1" height="1"><path transform="scale(0.01060,-0.01060)" fill="#151515" d="M45 1298 92 1456H1017L971 1298H734Q798 1218 816 1100H1017L971 942H819Q802 784 691.0 684.0Q580 584 336 584L828 12V0H601L72 618L71 742H315Q448 742 524.5 798.0Q601 854 622 942H43L89 1100H620Q598 1190 523.0 1244.0Q448 1298 309 1298Z"/></svg>
<svg style="left:1685.64px;top:936px" width="1" height="1"><path transform="scale(0.01060,-0.01060)" fill="#151515" d="M45 1298 92 1456H1017L971 1298H734Q798 1218 816 1100H1017L971 942H819Q802 784 691.0 684.0Q580 584 336 584L828 12V0H601L72 618L71 742H315Q448 742 524.5 798.0Q601 854 622 942H43L89 1100H620Q598 1190 523.0 1244.0Q448 1298 309 1298Z"/></svg>
<div class="t" style="left:107.83px;top:23px;font-size:18px;font-weight:400;color:#1f1f1f;transform:scaleX(0.9177);">FINLMS</div>
<div class="t" style="left:235.52px;top:84px;font-size:21px;font-weight:400;color:#1f1f1f;transform:scaleX(0.9811);">localhost</div>
<div class="t" style="left:316.77px;top:84px;font-size:21px;font-weight:400;color:#474747;transform:scaleX(0.9752);">:53827</div>
<div class="t" style="left:346.00px;top:163px;font-size:21px;font-weight:700;color:#ffffff;">HP</div>
<div class="t" style="left:435.55px;top:163px;font-size:21px;font-weight:700;color:#222222;transform:scaleX(0.9517);">Loan</div>
<div class="t" style="left:543.03px;top:163px;font-size:21px;font-weight:700;color:#222222;transform:scaleX(0.9735);">Deposit</div>
<div class="t" style="left:678.03px;top:163px;font-size:21px;font-weight:700;color:#222222;transform:scaleX(0.9660);">Ledger</div>
<div class="t" style="left:806.06px;top:163px;font-size:21px;font-weight:700;color:#222222;transform:scaleX(0.9410);">Day Book</div>
<div class="t" style="left:958.50px;top:163px;font-size:21px;font-weight:700;color:#222222;transform:scaleX(0.9853);">Trial Balance</div>
<div class="t" style="left:1145.02px;top:163px;font-size:21px;font-weight:700;color:#222222;transform:scaleX(0.9768);">Profit &amp; Loss</div>
<div class="t" style="left:1332.53px;top:163px;font-size:21px;font-weight:700;color:#222222;transform:scaleX(0.9714);">Balance Sheet</div>
<div class="t" style="left:1533.50px;top:163px;font-size:21px;font-weight:700;color:#222222;transform:scaleX(0.9648);">Outstanding</div>
<div class="t" style="left:1712.03px;top:163px;font-size:21px;font-weight:700;color:#222222;transform:scaleX(0.9719);">Reminder</div>
<div class="t" style="left:75.50px;top:230px;font-size:24px;font-weight:400;color:#2196f3;">HP Loan</div>
<div class="t" style="left:198.50px;top:230px;font-size:24px;font-weight:400;color:#1c1c1c;">HP Receipt</div>
<div class="t" style="left:349.96px;top:230px;font-size:24px;font-weight:400;color:#1c1c1c;transform:scaleX(1.0416);">HP Collection</div>
<div class="t" style="left:529.98px;top:230px;font-size:24px;font-weight:400;color:#1c1c1c;transform:scaleX(1.0180);">HP Pending</div>
<div class="t" style="left:688.99px;top:230px;font-size:24px;font-weight:400;color:#1c1c1c;transform:scaleX(1.0071);">HP Summary</div>
<div class="t" style="left:214.76px;top:321px;font-size:32px;font-weight:700;color:#ffffff;transform:scaleX(0.9716);">HP Loan Report</div>
<div class="t" style="left:216.70px;top:361px;font-size:20px;font-weight:400;color:rgba(255,255,255,0.92);transform:scaleX(1.0398);">View and filter hire purchase loan entries</div>
<div class="t" style="left:1468.35px;top:340.5px;font-size:22px;font-weight:700;color:#ffffff;transform:scaleX(0.9477);">Filters</div>
<div class="t" style="left:1621.70px;top:340.5px;font-size:22px;font-weight:700;color:#ffffff;transform:scaleX(0.9054);">Columns</div>
<div class="t" style="left:1796.75px;top:340.5px;font-size:22px;font-weight:700;color:#ffffff;transform:scaleX(0.9501);">Print</div>
<div class="t" style="left:133.75px;top:485px;font-size:20px;font-weight:700;color:#ffffff;transform:scaleX(0.9539);">S.No</div>
<div class="t" style="left:238.75px;top:485px;font-size:20px;font-weight:700;color:#ffffff;transform:scaleX(0.9418);">Acc Date</div>
<div class="t" style="left:388.75px;top:485px;font-size:20px;font-weight:700;color:#ffffff;transform:scaleX(0.9354);">Acc No</div>
<div class="t" style="left:493.75px;top:485px;font-size:20px;font-weight:700;color:#ffffff;transform:scaleX(0.9546);">Cus.Name</div>
<div class="t" style="left:717.72px;top:485px;font-size:20px;font-weight:700;color:#ffffff;transform:scaleX(0.9848);">Mob.No</div>
<div class="t" style="left:883.04px;top:485px;font-size:20px;font-weight:700;color:#ffffff;transform:scaleX(0.9598);">HP Type</div>
<div class="t" style="left:1047.54px;top:485px;font-size:20px;font-weight:700;color:#ffffff;transform:scaleX(0.9641);">HP Amt</div>
<div class="t" style="left:1229.00px;top:485px;font-size:20px;font-weight:700;color:#ffffff;transform:scaleX(0.9410);">Tot.Dues</div>
<div class="t" style="left:1379.00px;top:485px;font-size:20px;font-weight:700;color:#ffffff;transform:scaleX(0.9177);">Amt</div>
<div class="t" style="left:1528.03px;top:485px;font-size:20px;font-weight:700;color:#ffffff;transform:scaleX(0.9675);">Int.Amt</div>
<div class="t" style="left:1678.06px;top:485px;font-size:20px;font-weight:700;color:#ffffff;transform:scaleX(0.9440);">Due Amt</div>
<div class="t" style="left:131.69px;top:557px;font-size:20px;font-weight:400;color:#444444;">1</div>
<div class="t" style="left:236.14px;top:557px;font-size:20px;font-weight:400;color:#444444;transform:scaleX(0.9824);">01-01-2026</div>
<div class="t" style="left:384.93px;top:557px;font-size:20px;font-weight:400;color:#444444;">24</div>
<div class="t" style="left:490.67px;top:557px;font-size:20px;font-weight:400;color:#444444;transform:scaleX(1.0027);">NasreenVehicle</div>
<div class="t" style="left:714.78px;top:557px;font-size:20px;font-weight:400;color:#444444;transform:scaleX(0.9911);">7010989361</div>
<div class="t" style="left:880.29px;top:557px;font-size:20px;font-weight:400;color:#444444;transform:scaleX(1.0075);">Vehicle Loan</div>
<div class="t" style="left:1225.69px;top:557px;font-size:20px;font-weight:400;color:#444444;">10</div>
<div class="t" style="left:1091.96px;top:557px;font-size:20px;font-weight:400;color:#444444;transform:scaleX(0.9736);">1,00,000.00</div>
<div class="t" style="left:1407.35px;top:557px;font-size:20px;font-weight:400;color:#444444;transform:scaleX(0.9831);">10,000.00</div>
<div class="t" style="left:1568.77px;top:557px;font-size:20px;font-weight:400;color:#444444;transform:scaleX(0.9769);">1,000.00</div>
<div class="t" style="left:1707.35px;top:557px;font-size:20px;font-weight:400;color:#444444;transform:scaleX(0.9831);">10,000.00</div>
<div class="t" style="left:130.93px;top:629px;font-size:20px;font-weight:400;color:#444444;">2</div>
<div class="t" style="left:236.14px;top:629px;font-size:20px;font-weight:400;color:#444444;transform:scaleX(0.9824);">05-01-2026</div>
<div class="t" style="left:385.99px;top:629px;font-size:20px;font-weight:400;color:#444444;">9</div>
<div class="t" style="left:490.80px;top:629px;font-size:20px;font-weight:400;color:#444444;transform:scaleX(0.9752);">Shami</div>
<div class="t" style="left:716.12px;top:629px;font-size:20px;font-weight:400;color:#444444;transform:scaleX(1.0020);">87934578</div>
<div class="t" style="left:880.29px;top:629px;font-size:20px;font-weight:400;color:#444444;transform:scaleX(1.0075);">Vehicle Loan</div>
<div class="t" style="left:1225.32px;top:629px;font-size:20px;font-weight:400;color:#444444;">6</div>
<div class="t" style="left:1091.19px;top:629px;font-size:20px;font-weight:400;color:#444444;transform:scaleX(0.9809);">2,00,000.00</div>
<div class="t" style="left:1407.75px;top:629px;font-size:20px;font-weight:400;color:#444444;transform:scaleX(0.9786);">33,333.33</div>
<div class="t" style="left:1584.98px;top:629px;font-size:20px;font-weight:400;color:#444444;transform:scaleX(0.9782);">500.00</div>
<div class="t" style="left:1707.75px;top:629px;font-size:20px;font-weight:400;color:#444444;transform:scaleX(0.9786);">33,833.33</div>
<div class="t" style="left:131.94px;top:701px;font-size:20px;font-weight:400;color:#444444;">3</div>
<div class="t" style="left:236.14px;top:701px;font-size:20px;font-weight:400;color:#444444;transform:scaleX(0.9824);">05-01-2026</div>
<div class="t" style="left:386.12px;top:701px;font-size:20px;font-weight:400;color:#444444;">8</div>
<div class="t" style="left:490.80px;top:701px;font-size:20px;font-weight:400;color:#444444;transform:scaleX(0.9037);">Siva</div>
<div class="t" style="left:715.99px;top:701px;font-size:20px;font-weight:400;color:#444444;transform:scaleX(1.0111);">9789359042</div>
<div class="t" style="left:880.21px;top:701px;font-size:20px;font-weight:400;color:#444444;transform:scaleX(0.9822);">Cheque Loan</div>
<div class="t" style="left:1225.69px;top:701px;font-size:20px;font-weight:400;color:#444444;">12</div>
<div class="t" style="left:1092.18px;top:701px;font-size:20px;font-weight:400;color:#444444;transform:scaleX(0.9715);">3,00,000.00</div>
<div class="t" style="left:1406.58px;top:701px;font-size:20px;font-weight:400;color:#444444;transform:scaleX(0.9918);">25,000.00</div>
<div class="t" style="left:1583.38px;top:701px;font-size:20px;font-weight:400;color:#444444;transform:scaleX(1.0044);">250.00</div>
<div class="t" style="left:1706.58px;top:701px;font-size:20px;font-weight:400;color:#444444;transform:scaleX(0.9918);">25,250.00</div>
<div class="t" style="left:131.53px;top:773px;font-size:20px;font-weight:400;color:#444444;">4</div>
<div class="t" style="left:235.71px;top:773px;font-size:20px;font-weight:400;color:#444444;transform:scaleX(0.9866);">12-02-2026</div>
<div class="t" style="left:385.69px;top:773px;font-size:20px;font-weight:400;color:#444444;">19</div>
<div class="t" style="left:490.29px;top:773px;font-size:20px;font-weight:400;color:#444444;transform:scaleX(1.0236);">Arshaf</div>
<div class="t" style="left:715.99px;top:773px;font-size:20px;font-weight:400;color:#444444;transform:scaleX(1.0100);">9878978787</div>
<div class="t" style="left:881.18px;top:773px;font-size:20px;font-weight:400;color:#444444;transform:scaleX(0.9770);">Other Loan</div>
<div class="t" style="left:1225.69px;top:773px;font-size:20px;font-weight:400;color:#444444;">12</div>
<div class="t" style="left:1106.58px;top:773px;font-size:20px;font-weight:400;color:#444444;transform:scaleX(0.9918);">20,000.00</div>
<div class="t" style="left:1418.50px;top:773px;font-size:20px;font-weight:400;color:#444444;transform:scaleX(0.9804);">1,666.67</div>
<div class="t" style="left:1583.38px;top:773px;font-size:20px;font-weight:400;color:#444444;transform:scaleX(1.0044);">200.00</div>
<div class="t" style="left:1718.50px;top:773px;font-size:20px;font-weight:400;color:#444444;transform:scaleX(0.9804);">1,866.67</div>
<div class="t" style="left:132.53px;top:845px;font-size:20px;font-weight:400;color:#444444;">5</div>
<div class="t" style="left:235.71px;top:845px;font-size:20px;font-weight:400;color:#444444;transform:scaleX(0.9866);">12-02-2026</div>
<div class="t" style="left:385.69px;top:845px;font-size:20px;font-weight:400;color:#444444;">18</div>
<div class="t" style="left:490.69px;top:845px;font-size:20px;font-weight:400;color:#444444;transform:scaleX(0.9877);">Nasreen</div>
<div class="t" style="left:715.99px;top:845px;font-size:20px;font-weight:400;color:#444444;transform:scaleX(1.0100);">9878767867</div>
<div class="t" style="left:881.18px;top:845px;font-size:20px;font-weight:400;color:#444444;transform:scaleX(0.9770);">Other Loan</div>
<div class="t" style="left:1225.69px;top:845px;font-size:20px;font-weight:400;color:#444444;">12</div>
<div class="t" style="left:1106.58px;top:845px;font-size:20px;font-weight:400;color:#444444;transform:scaleX(0.9918);">20,000.00</div>
<div class="t" style="left:1418.50px;top:845px;font-size:20px;font-weight:400;color:#444444;transform:scaleX(0.9804);">1,666.67</div>
<div class="t" style="left:1583.38px;top:845px;font-size:20px;font-weight:400;color:#444444;transform:scaleX(1.0044);">200.00</div>
<div class="t" style="left:1718.50px;top:845px;font-size:20px;font-weight:400;color:#444444;transform:scaleX(0.9804);">1,866.67</div>
<div class="t" style="left:129.00px;top:918px;font-size:21px;font-weight:400;color:#111111;transform:scaleX(1.0574);">Total</div>
<div class="t" style="left:1087.26px;top:919px;font-size:20px;font-weight:400;color:#151515;transform:scaleX(1.0380);">9,20,000.00</div>
<div class="t" style="left:1403.30px;top:919px;font-size:20px;font-weight:400;color:#151515;transform:scaleX(1.0523);">95,000.02</div>
<div class="t" style="left:1565.42px;top:919px;font-size:20px;font-weight:400;color:#151515;transform:scaleX(1.0469);">4,850.00</div>
<div class="t" style="left:1703.30px;top:919px;font-size:20px;font-weight:400;color:#151515;transform:scaleX(1.0523);">98,850.02</div>
<div class="t" style="left:141.81px;top:1034.3px;font-size:22px;font-weight:400;color:#454545;transform:scaleX(0.8893);">Search</div>
<div class="t" style="left:921.50px;top:1023px;font-size:17px;font-weight:700;color:#d9e8e0;">b</div>
<div class="t" style="left:1375.00px;top:1023px;font-size:16px;font-weight:400;color:#ffffff;">4</div>
<div class="t" style="left:1578.13px;top:1024.7px;font-size:19px;font-weight:400;color:#1c1c1c;transform:scaleX(0.8707);">ENG</div>
<div class="t" style="left:1586.00px;top:1047.3px;font-size:19px;font-weight:400;color:#1c1c1c;">IN</div>
<div class="t" style="left:1780.00px;top:1022.3px;font-size:19px;font-weight:400;color:#1c1c1c;transform:scaleX(0.9193);">03:43 PM</div>
<div class="t" style="left:1761.70px;top:1046.3px;font-size:19px;font-weight:400;color:#1c1c1c;transform:scaleX(0.9553);">06-03-2026</div>
</body></html>
